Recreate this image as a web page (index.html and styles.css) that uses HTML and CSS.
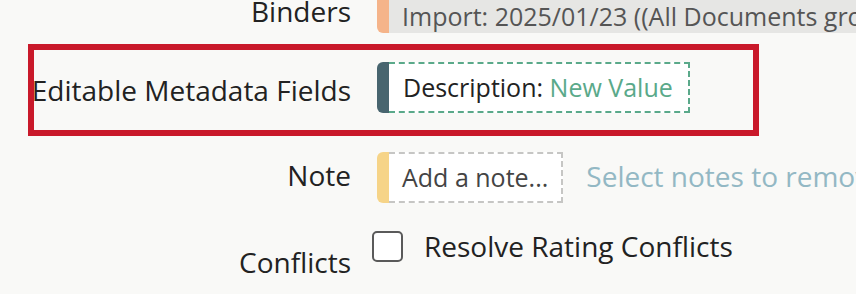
FILE: index.html
```html
<!DOCTYPE html>
<html lang="en">
<head>
<meta charset="utf-8">
<title>Bulk edit</title>
<link rel="stylesheet" href="styles.css">
</head>
<body>
<div class="form">
  <div class="row row-binders">
    <div class="label">Binders</div>
    <div class="value">
      <div class="chip chip-binder"><span class="bar"></span><span class="body">Import: 2025/01/23 ((All Documents group))</span></div>
    </div>
  </div>

  <div class="row row-highlight">
    <div class="label">Editable Metadata Fields</div>
    <div class="value">
      <div class="chip chip-field"><span class="bar"></span><span class="body"><span class="field-name">Description:</span> <span class="field-value">New Value</span></span></div>
    </div>
  </div>

  <div class="row row-note">
    <div class="label">Note</div>
    <div class="value">
      <div class="chip chip-note"><span class="bar"></span><span class="body">Add a note...</span></div>
      <span class="hint">Select notes to remove</span>
    </div>
  </div>

  <div class="row row-conflicts">
    <div class="label">Conflicts</div>
    <div class="value">
      <span class="checkbox"></span>
      <span class="check-label">Resolve Rating Conflicts</span>
    </div>
  </div>
</div>
</body>
</html>
```

FILE: styles.css
```css
html, body {
  margin: 0;
  padding: 0;
  overflow: hidden;
}

body {
  background: #f9f9f7;
  font-family: "Open Sans", "Noto Sans", sans-serif;
  color: #222;
}

.form {
  display: flex;
  flex-direction: column;
}

.row {
  display: grid;
  grid-template-columns: 351px minmax(0, 1fr);
  column-gap: 26px;
  align-items: start;
}

.label {
  display: flex;
  justify-content: flex-end;
  white-space: nowrap;
  font-size: 28px;
  line-height: 38px;
  color: #222;
}

.value {
  display: flex;
  align-items: flex-start;
  min-width: 0;
  white-space: nowrap;
}

/* chips */
.chip {
  display: flex;
  flex: none;
  font-size: 25px;
  line-height: 33px;
}

.chip .bar {
  width: 12px;
  flex: none;
  border-radius: 6px 0 0 6px;
}

.chip .body {
  display: block;
  white-space: nowrap;
}

/* binders row */
.row-binders {
  margin-top: -10px;
}

.row-binders .label {
  margin-top: 2px;
}

.chip-binder {
  flex: 1;
}

.chip-binder .bar {
  background: #f5b48a;
}

.chip-binder .body {
  flex: 1;
  background: #e6e6e4;
  color: #555;
  padding: 10px 14px 0 13px;
}

/* highlighted row */
.row-highlight {
  margin-top: 11px;
  margin-left: 28px;
  width: fit-content;
  grid-template-columns: 317px auto;
  border: 6px solid #c9192a;
  padding: 12px 63px 17px 0;
}

.row-highlight .label {
  margin-top: 9px;
}

.chip-field .bar {
  background: #48656f;
}

.chip-field .body {
  background: #fff;
  border: 2px dashed #5aa98a;
  border-left: none;
  padding: 7px 15px 7px 14px;
}

.field-name {
  color: #222;
}

.field-value {
  color: #5aa98a;
}

/* note row */
.row-note {
  margin-top: 16px;
}

.row-note .label {
  margin-top: 4px;
}

.chip-note .bar {
  background: #f6d488;
}

.chip-note .body {
  background: #fff;
  border: 2px dashed #c6c6c4;
  border-left: none;
  color: #444;
  padding: 7px 13px 7px 13px;
}

.hint {
  margin-left: 23px;
  margin-top: 5px;
  font-size: 28px;
  line-height: 38px;
  color: #93b8c4;
}

/* conflicts row */
.row-conflicts {
  margin-top: 24px;
}

.row-conflicts .label {
  margin-top: 16px;
}

.row-conflicts .value {
  align-items: center;
}

.checkbox {
  flex: none;
  box-sizing: border-box;
  width: 31px;
  height: 31px;
  margin-left: -5px;
  border: 2px solid #5a5a5a;
  border-radius: 5px;
  background: #fff;
}

.check-label {
  margin-left: 21px;
  font-size: 28px;
  line-height: 38px;
  color: #222;
}
```
